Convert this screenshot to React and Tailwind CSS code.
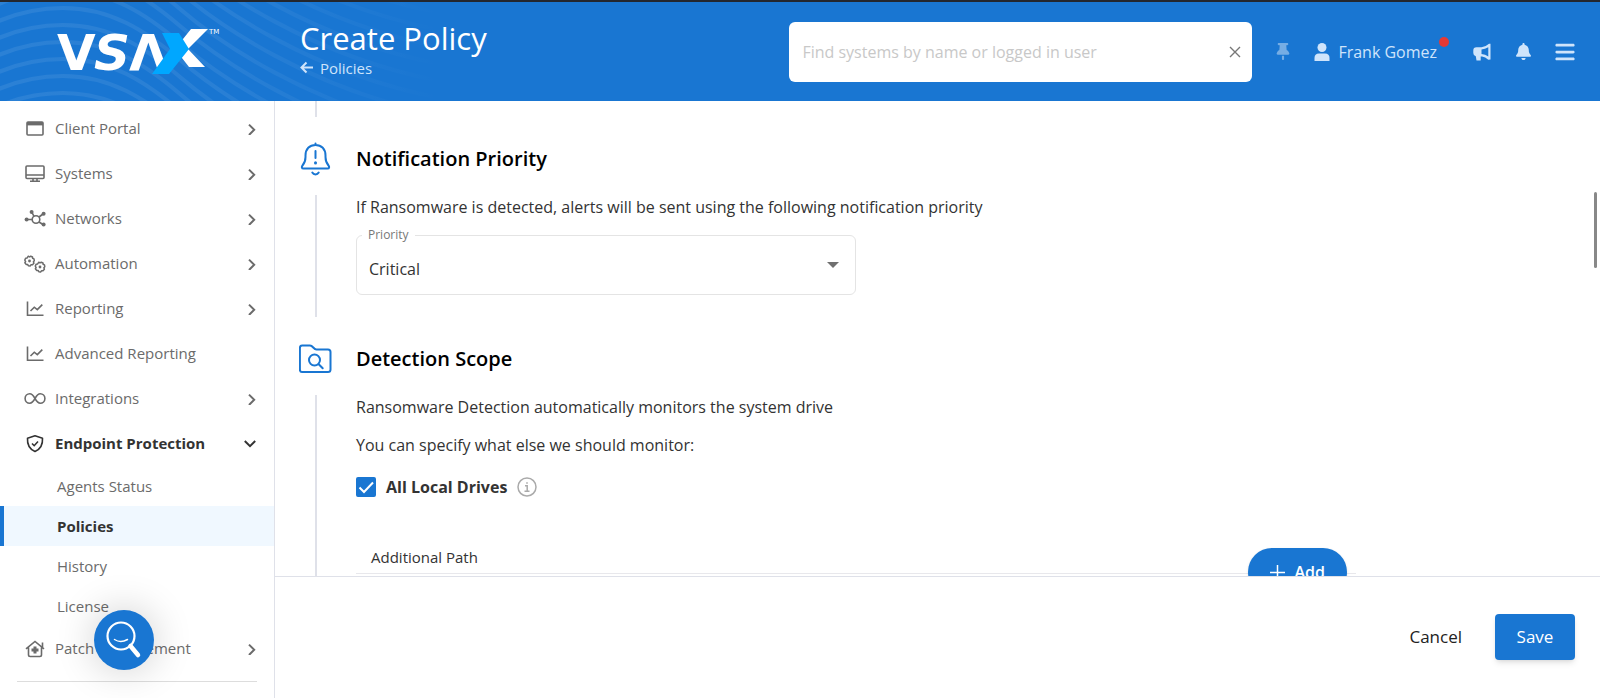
import React from "react";
import { FaThumbtack, FaBell, FaBars } from "react-icons/fa6";

const iconProps = {
  width: 22,
  height: 20,
  viewBox: "0 0 22 20",
  fill: "none",
  stroke: "currentColor",
  strokeWidth: 1.6,
  "aria-hidden": true,
};

const PortalIcon = () => (
  <svg {...iconProps}>
    <rect x="3" y="3" width="16" height="13" rx="1" />
    <path d="M3 4.7h16" strokeWidth="3.4" />
  </svg>
);

const MonitorIcon = () => (
  <svg {...iconProps}>
    <rect x="2" y="2" width="18" height="12.5" rx="1" />
    <path d="M2 11h18M9 14.5v2.8M13 14.5v2.8M6 17.3h10" />
  </svg>
);

const NetworkIcon = () => (
  <svg {...iconProps}>
    <circle cx="12" cy="10.5" r="3.8" />
    <path d="M3 10.5h5.2M8 3.5l2 3.8M15 8l4-3M15 13l4 2.500" />
    <g fill="currentColor" stroke="none">
      <circle cx="2.6" cy="10.5" r="2" />
      <circle cx="7.6" cy="3" r="2" />
      <circle cx="19.6" cy="4.8" r="2" />
      <circle cx="19.6" cy="15.6" r="2" />
    </g>
  </svg>
);

const Cog = ({ x, y }) => (
  <g transform={`translate(${x} ${y})`}>
    <path d="M-1.2-4.8 0-4 1.2-4.8 3-4 3.1-2.7 4.5-2.1 4.8-.2 3.9.8 4.4 2.3 3 3.8 1.6 3.7.6 4.9-1.2 4.7-1.9 3.5-3.4 3.4-4.6 1.7-3.9.5-4.7-.9-3.9-2.7-2.5-2.9z" strokeWidth="1.5" strokeLinejoin="round" />
    <circle r="1.4" fill="currentColor" stroke="none" />
  </g>
);

const CogsIcon = () => (
  <svg {...iconProps}>
    <Cog x={5.5} y={7} />
    <Cog x={16} y={13} />
  </svg>
);

const ChartIcon = () => (
  <svg {...iconProps}>
    <path d="M3.5 2.5v13.800h16M6.500 12l3.800-3.800 3 2.400 5-5" />
  </svg>
);

const InfinityIcon = () => (
  <svg {...iconProps}>
    <path d="M11 9.5C9.3 6.500 7.900 4.800 5.800 4.800a4.700 4.700 0 0 0 0 9.400C7.900 14.200 9.300 12.500 11 9.500s3.100-4.700 5.200-4.700a4.700 4.700 0 0 1 0 9.400C14.100 14.200 12.700 12.500 11 9.500z" />
  </svg>
);

const ShieldIcon = () => (
  <svg {...iconProps}>
    <path d="M11 1.800 18.500 4.200c.4 6-1.200 10.500-7.500 13.300C4.700 14.700 3.100 10.200 3.500 4.200z" strokeLinejoin="round" />
    <path d="m8 9.500 2.200 2.200L14 7.500" />
  </svg>
);

const PatchIcon = () => (
  <svg {...iconProps}>
    <path d="M2 9.800 11 2.500l9 7.300M4.500 8.500v7.300q0 1.700 1.700 1.700h9.600q1.700 0 1.700-1.700V8.500M18.500 3.500v4.500" />
    <path d="M11 7.500v7M7.500 11h7" strokeWidth="3" />
  </svg>
);

const Chevron = ({ open }) => (
  <svg
    width="12"
    height="12"
    viewBox="0 0 12 12"
    fill="none"
    stroke="currentColor"
    strokeWidth="2"
    aria-hidden="true"
  >
    <path d={open ? "M.8 3 6 8.200 11.200 3" : "M5 1.600 10.200 6.800 5 12"} />
  </svg>
);

const endpointPages = [
  { label: "Agents Status" },
  { label: "Policies", active: true },
  { label: "History" },
  { label: "License" },
];

const menu = [
  { label: "Client Portal", icon: PortalIcon },
  { label: "Systems", icon: MonitorIcon },
  { label: "Networks", icon: NetworkIcon },
  { label: "Automation", icon: CogsIcon },
  { label: "Reporting", icon: ChartIcon },
  { label: "Advanced Reporting", icon: ChartIcon, leaf: true },
  { label: "Integrations", icon: InfinityIcon },
  { label: "Endpoint Protection", icon: ShieldIcon, children: endpointPages },
  { label: "Patch Management", icon: PatchIcon },
];

const Logo = () => (
  <svg width="170" height="60" viewBox="0 0 170 60" role="img" aria-label="VSAX">
    <g fill="#ffffff" fontFamily="DejaVu Sans, sans-serif" fontWeight="700">
      <text x="5" y="48" fontSize="50">V</text>
      <text x="42" y="48" fontSize="50" fontStyle="italic">S</text>
      <text x="77" y="48" fontSize="50">Λ</text>
      <text x="157" y="12" fontSize="7" fontWeight="400">TM</text>
    </g>
    <path d="M139 7h17L136 27l17 18h-16l-14-18z" fill="#ffffff" />
    <path d="M110 11h17l10 16-20 25h-17l18-25z" fill="#00a7ff" />
  </svg>
);

// vertical offset of each wave line
const waves = [-162, -145, -128, -111, -94, -77, -60, -43, -26, -9, 8, 25, 42, 59, 76, 93];

const HeaderWaves = () => (
  <svg className="absolute inset-y-0 left-0 h-full w-[520px]" viewBox="0 2 520 99" fill="none" aria-hidden="true">
    <defs>
      <linearGradient id="waves" gradientUnits="userSpaceOnUse" x1="0" y1="0" x2="440" y2="0">
        <stop offset="0" stopColor="#ffffff" stopOpacity="0.08" />
        <stop offset="0.5" stopColor="#ffffff" stopOpacity="0.07" />
        <stop offset="1" stopColor="#ffffff" stopOpacity="0" />
      </linearGradient>
    </defs>
    {waves.map((y) => (
      <path
        key={y}
        transform={`translate(0 ${y})`}
        d="M-60 52C-20 15 20 0 63 0C110 0 145 22 180 52S310 150 440 175"
        stroke="url(#waves)"
        strokeWidth="4"
      />
    ))}
  </svg>
);

const Header = () => (
  <header className="relative flex shrink-0 items-center h-[101px] border-t-2 border-[#23272f] bg-[#1976d2] text-[#cfe4fb]">
    <HeaderWaves />

    <a href="#" className="relative w-[300px] shrink-0 pl-[52px]">
      <Logo />
    </a>

    <div className="relative flex-1 pb-2">
      <h1 className="text-[31px] leading-10 text-white">Create Policy</h1>
      <a href="#" className="flex items-center gap-[7px] text-[15px] leading-5">
        <svg width="13" height="13" viewBox="0 0 13 13" fill="none" stroke="currentColor" strokeWidth="2" aria-hidden="true">
          <path d="M6.500 1.500 1.500 6.500l5 5M1.500 6.500H13" />
        </svg>
        Policies
      </a>
    </div>

    {/* Search */}
    <div className="relative flex h-[60px] w-[463px] items-center rounded-md bg-white">
      <input
        type="text"
        aria-label="Find systems"
        placeholder="Find systems by name or logged in user"
        className="h-full min-w-0 flex-1 rounded-md pl-[13px] text-base text-gray-800 outline-none placeholder:text-[#c8c8c8]"
      />
      <button type="button" aria-label="Clear search" className="px-[11px] text-[#777777]">
        <svg width="12" height="12" viewBox="0 0 12 12" stroke="currentColor" strokeWidth="1.400" aria-hidden="true">
          <path d="m1 1 10 10M11 1 1 11" />
        </svg>
      </button>
    </div>

    <div className="flex items-center pl-6 pr-6">
      <button type="button" aria-label="Pin" className="text-[#76ade4]">
        <FaThumbtack size={17} className="w-[14px]" />
      </button>
      <button type="button" className="relative ml-6 flex items-center gap-2 text-base">
        <svg width="16" height="18" viewBox="0 0 16 18" fill="currentColor" aria-hidden="true">
          <circle cx="8" cy="4.500" r="4.500" />
          <path d="M.5 18v-3q0-4.500 4.500-4.500h6q4.500 0 4.500 4.500v3z" />
        </svg>
        Frank Gomez
        <span className="absolute -right-3 -top-[3px] size-[10px] rounded-full bg-[#e53935]" />
      </button>
      <button type="button" aria-label="Announcements" className="ml-9">
        <svg width="18" height="18" viewBox="0 0 18 18" fill="currentColor" aria-hidden="true">
          <path d="M17.500.8v15.700l-2.200.2q-3-3-6.300-3.300l-1.300.1v4H3.500l-.7-4.200Q.3 12.800.3 10V7.500Q.3 4.300 3.500 4.300h5Q12.500 4 16 .8zM15.300 4.200Q12 6.300 8.500 6.500v4.600q3.800.3 6.800 2.400z" fillRule="evenodd" />
        </svg>
      </button>
      <button type="button" aria-label="Notifications" className="ml-6">
        <FaBell size={17} />
      </button>
      <button type="button" aria-label="Menu" className="ml-[22px]">
        <FaBars size={22} />
      </button>
    </div>
  </header>
);

const Sidebar = () => (
  <nav className="w-[275px] shrink-0 overflow-hidden border-r border-[#dfe1e9] pt-[5px] text-[15px] text-[#6b6b6b]">
    <ul>
      {menu.map(({ label, icon: Icon, leaf, children }) => (
        <li key={label}>
          <a
            href="#"
            className={`flex h-[45px] items-center gap-[9px] pl-6 pr-[18px] ${children ? "font-bold text-[#333333]" : ""}`}
          >
            <Icon />
            <span className="flex-1">{label}</span>
            {!leaf && <Chevron open={!!children} />}
          </a>
          {children && (
            <ul>
              {children.map((page) => (
                <li key={page.label}>
                  <a
                    href="#"
                    className={`flex h-10 items-center border-l-4 pl-[53px] ${
                      page.active ? "border-[#1976d2] bg-[#f0f8ff] font-bold text-[#333333]" : "border-transparent"
                    }`}
                  >
                    {page.label}
                  </a>
                </li>
              ))}
            </ul>
          )}
        </li>
      ))}
    </ul>
    <hr className="mx-[17px] mt-[10px] border-[#dddddd]" />
  </nav>
);

const BellAlertIcon = () => (
  <svg width="34" height="34" viewBox="0 0 34 34" fill="none" stroke="#1976d2" strokeWidth="2" strokeLinecap="round" strokeLinejoin="round" aria-hidden="true">
    <path d="M16.500 1.500v1.500M4.500 26.500h24c2 0 2-1.800 1-3-2-2.300-3-5-3-8.500v-1.500C26.500 7 22.500 3 16.500 3S6.500 7 6.500 13.500V15c0 3.500-1 6.200-3 8.500-1 1.200-1 3 1 3zM16.500 9v7M13.300 30.500c1.400 2.500 5 2.500 6.400 0" />
    <path d="M16.500 20.800v.2" strokeWidth="3" />
  </svg>
);

const FolderSearchIcon = () => (
  <svg width="34" height="34" viewBox="0 0 34 34" fill="none" stroke="#1976d2" strokeWidth="2" strokeLinecap="round" strokeLinejoin="round" aria-hidden="true">
    <path d="M3 3.500h8c3 0 3.500 4 6.500 4H29q2.500 0 2.500 2.500v17.500Q31.500 30 29 30H3Q.9 30 .9 27.500V6Q.9 3.500 3 3.500z" />
    <circle cx="15.500" cy="18" r="5.500" />
    <path d="m19.700 22.200 4 4" />
  </svg>
);

const InfoIcon = () => (
  <svg width="20" height="20" viewBox="0 0 20 20" fill="none" stroke="#aaaaaa" strokeWidth="1.500" aria-hidden="true">
    <circle cx="10" cy="10" r="9" />
    <path d="M8 8.800h2.200v5M7.500 14.300h5M9.200 6h1.600" />
  </svg>
);

const Section = ({ icon: Icon, title, children }) => (
  <section className="grid grid-cols-[34px_1fr] gap-x-[23px]">
    <div className="flex h-[78px] items-center justify-center pt-1.5">
      <Icon />
    </div>
    <h2 className="flex h-[78px] items-center pt-1.5 text-xl font-semibold text-black">{title}</h2>
    <div className="mx-auto w-[2px] bg-[#dfe1e9]" />
    <div>{children}</div>
  </section>
);

const Policy = () => (
  <main className="relative min-h-0 flex-1 overflow-hidden px-6 text-base leading-6 text-[#333333]">
    <div className="ml-4 h-4 w-[2px] bg-[#dfe1e9]" />

    <Section icon={BellAlertIcon} title="Notification Priority">
      <p>If Ransomware is detected, alerts will be sent using the following notification priority</p>
      <div className="relative mb-[22px] mt-4 max-w-[500px]">
        <label htmlFor="priority" className="absolute -top-2 left-1.5 bg-white px-1.5 text-xs leading-4 text-[#777777]">
          Priority
        </label>
        <select
          id="priority"
          className="h-[60px] w-full appearance-none rounded-md border border-[#e4e4e4] bg-white pl-3 pt-2 outline-none"
        >
          <option>Critical</option>
        </select>
        <svg className="pointer-events-none absolute right-[17px] top-[27px]" width="12" height="6" fill="#707070" aria-hidden="true">
          <path d="M0 0h12L6 6z" />
        </svg>
      </div>
    </Section>

    <Section icon={FolderSearchIcon} title="Detection Scope">
      <p>Ransomware Detection automatically monitors the system drive</p>
      <p className="mt-[14px]">You can specify what else we should monitor:</p>
      <div className="mt-[18px] flex items-center gap-[10px]">
        <span className="relative flex">
          <input
            id="all-drives"
            type="checkbox"
            defaultChecked
            className="peer size-5 appearance-none rounded-[2px] border-2 border-[#1976d2] bg-white checked:bg-[#1976d2]"
          />
          <svg className="pointer-events-none absolute inset-0 hidden peer-checked:block" width="20" height="20" fill="none" stroke="#ffffff" strokeWidth="2" aria-hidden="true">
            <path d="m3.500 10.500 4.500 4.500 9-9.500" />
          </svg>
        </span>
        <label htmlFor="all-drives" className="font-bold">All Local Drives</label>
        <InfoIcon />
      </div>

      <table className="mt-[42px] w-full max-w-[1000px]">
        <thead>
          <tr>
            <th scope="col" className="border-b border-[#e8e8ec] pl-[15px] text-left text-[15px] font-normal">
              Additional Path
            </th>
            <th scope="col" className="h-8 border-b border-[#e8e8ec] pr-[9px]">
              <div className="relative flex h-8 justify-end">
                <button type="button" className="absolute right-0 top-[7px] flex h-12 items-center gap-[10px] rounded-full bg-[#1976d2] px-[22px] font-semibold text-white shadow">
                  <svg width="15" height="15" stroke="currentColor" strokeWidth="1.500" aria-hidden="true">
                    <path d="M7.500 0v15M0 7.500h15" />
                  </svg>
                  Add
                </button>
              </div>
            </th>
          </tr>
        </thead>
      </table>
      <div className="h-40" />
    </Section>

    <div className="absolute right-[3px] top-[91px] h-[76px] w-[3px] rounded-full bg-[#888888]" />
  </main>
);

const App = () => {
  return (
    <div className="relative flex h-screen flex-col overflow-hidden bg-white font-['Open_Sans',sans-serif]">
      <Header />

      <div className="flex min-h-0 flex-1">
        <Sidebar />
        <div className="flex min-w-0 flex-1 flex-col">
          <Policy />
          <footer className="flex h-[122px] shrink-0 items-center justify-end gap-[33px] border-t border-[#dfe1e9] pb-[2px] pr-[25px] text-[17px] font-medium">
            <button type="button" className="text-[#222222]">Cancel</button>
            <button type="button" className="h-[46px] w-20 rounded bg-[#1976d2] text-white shadow-md">Save</button>
          </footer>
        </div>
      </div>

      {/* Floating search */}
      <button
        type="button"
        aria-label="Search"
        className="absolute bottom-7 left-[94px] flex size-[60px] items-center justify-center rounded-full bg-[#1976d2] shadow-[0_0_40px_rgba(0,0,0,0.2)]"
      >
        <svg width="36" height="38" viewBox="0 0 36 38" fill="none" stroke="#ffffff" strokeLinecap="round" aria-hidden="true">
          <circle cx="15" cy="15" r="13.500" strokeWidth="2.200" />
          <path d="M8.500 18.500q6 4 13 0" strokeWidth="1.500" />
          <path d="m24.500 25 7.500 9" strokeWidth="4.500" />
        </svg>
      </button>
    </div>
  );
};

export default App;
